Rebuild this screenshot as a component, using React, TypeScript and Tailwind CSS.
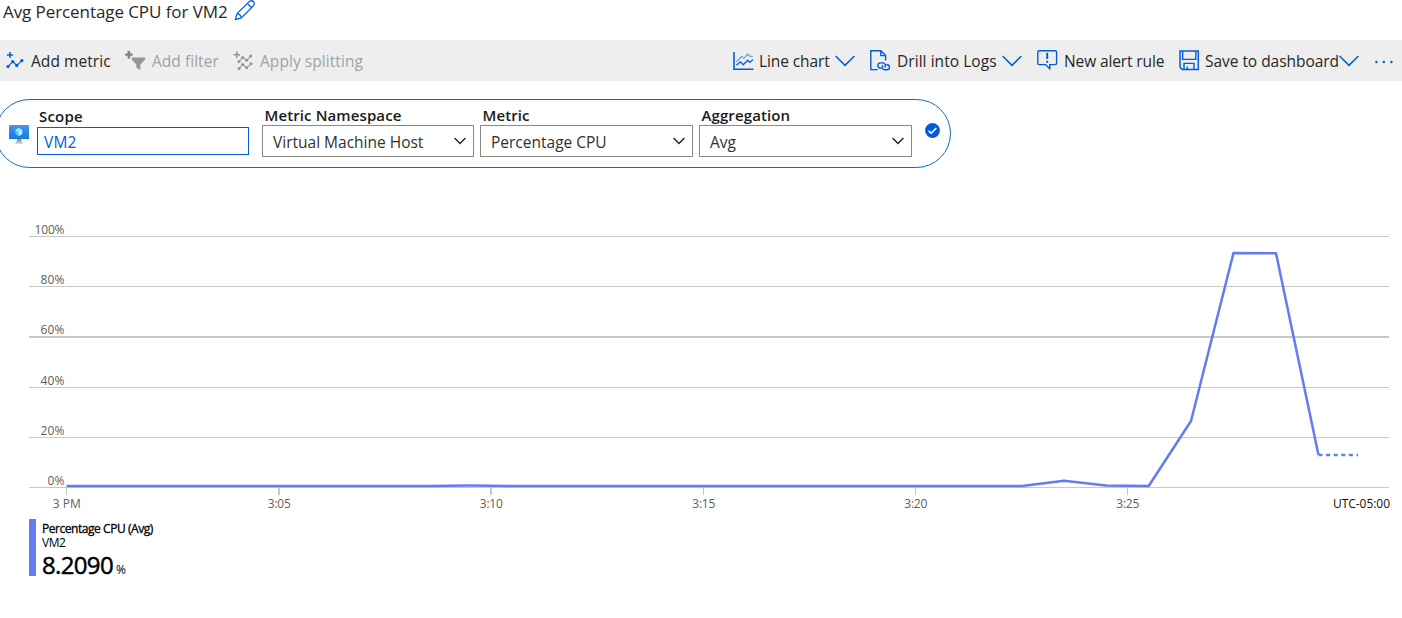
import type { ReactNode } from "react";

const BLUE = "#015cda";

function PencilIcon() {
  return (
    <svg className="-mt-px" width="22" height="22" viewBox="0 0 22 22" fill="none" stroke={BLUE} strokeWidth="1.3" strokeLinejoin="round">
      <path d="M1.2 20.6 3.1 14.6 14.6 3.1Q17.2.6 19.4 2.6 21.4 4.8 18.9 7.4L7.4 18.9Z" />
      <path d="M3.1 14.6Q6.6 15.2 7.4 18.9M13.3 4.4 17.6 8.7" />
    </svg>
  );
}

function AddMetricIcon() {
  return (
    <svg width="18" height="18" viewBox="0 0 18 18" fill={BLUE} stroke={BLUE}>
      <path d="M4 0v6M1 3h6" fill="none" strokeWidth="1.5" />
      <path d="M2 14.6 6.8 9.6 10.8 13.4 16 8.6" fill="none" strokeWidth="1.1" />
      <g stroke="none">
        <circle cx="2" cy="14.6" r="1.6" />
        <circle cx="6.8" cy="9.6" r="1.6" />
        <circle cx="10.8" cy="13.4" r="1.6" />
        <circle cx="15.9" cy="8.6" r="1.6" />
      </g>
    </svg>
  );
}

function AddFilterIcon() {
  return (
    <svg width="21" height="20" viewBox="0 0 21 20" fill="#949494">
      <path d="M2.6 0h2.5v2.4H7.6V4.8H5.1v2.6H2.6V4.8H.2V2.4H2.6Z" fill="#808080" />
      <path d="M6.8 6.4H20.2V8.4L15.4 13.4V19L11.4 16.8V13.4L6.8 8.4Z" />
    </svg>
  );
}

function SplitIcon() {
  return (
    <svg width="20" height="20" viewBox="0 0 20 20" fill="#949494" stroke="#949494">
      <path d="M3.8 .5v6.6M.5 3.8h6.6" fill="none" strokeWidth="1.6" />
      <path d="M6 10.5 9.7 6.4 13.7 9.3 17.7 5M6 17.5 9.7 13.5 13.7 16.8 18 12.8" fill="none" strokeWidth="1.1" />
      <g stroke="none">
        <circle cx="6" cy="10.5" r="1.5" />
        <circle cx="9.7" cy="6.4" r="1.5" />
        <circle cx="13.7" cy="9.3" r="1.5" />
        <circle cx="17.7" cy="5" r="1.5" />
        <circle cx="6" cy="17.5" r="1.5" />
        <circle cx="9.7" cy="13.5" r="1.5" />
        <circle cx="13.7" cy="16.8" r="1.5" />
        <circle cx="18" cy="12.8" r="1.5" />
      </g>
    </svg>
  );
}

function LineChartIcon() {
  return (
    <svg width="21" height="20" viewBox="0 0 21 20" fill="none">
      <path d="M1 1V18.3H20.5" stroke={BLUE} strokeWidth="1.6" />
      <path d="M3.4 11 8.6 5.4 11 7.4 14.6 3 17 5.4H20" stroke="#5eb0d8" strokeWidth="1.3" />
      <path d="M3.4 14.2 7.4 10.8 10.2 13.8 14.8 9.2 17 11.4 20 8.4" stroke={BLUE} strokeWidth="1.3" />
    </svg>
  );
}

function LogsIcon() {
  return (
    <svg width="21" height="21" viewBox="0 0 21 21" fill="none" stroke={BLUE} strokeWidth="1.4">
      <path d="M7.6 19.6H.8V.8H10.8L15.6 5.6V10.6M10.8.8V5.6H15.6" />
      <path d="M11.4 18.3H10.6A2.7 2.7 0 0 1 10.6 12.9H13A2.7 2.7 0 0 1 14.6 17.6M16.4 14.7H17A2.5 2.5 0 0 1 17 19.7H14.6A2.6 2.6 0 0 1 13 15.2" />
    </svg>
  );
}

function AlertIcon() {
  return (
    <svg width="21" height="21" viewBox="0 0 21 21" fill="none" stroke={BLUE} strokeWidth="1.4">
      <path d="M2 .8H18Q19.6.8 19.6 2.4V13Q19.6 14.6 18 14.6H12.8V18.8L8.6 14.6H2Q.8 14.6.8 13V2.4Q.8.8 2 .8Z" />
      <path d="M10.2 2.8V9M10.2 10.8V12.8" strokeWidth="1.9" />
    </svg>
  );
}

function SaveIcon() {
  return (
    <svg width="21" height="21" viewBox="0 0 21 21" fill="none" stroke={BLUE} strokeWidth="1.5">
      <path d="M1 1H19.3V19.4H3.2L1 17.2Z" />
      <path d="M3.6 1V9.4H16.8V1M5 19.4V13.4H15V19.4M8.2 19.4V16.4" strokeWidth="1.4" />
    </svg>
  );
}

function WideChevron() {
  return (
    <svg className="mt-px shrink-0" width="20" height="12" viewBox="0 0 20 12" fill="none" stroke={BLUE} strokeWidth="1.5">
      <path d="M.6 1 10 10.4 19.4 1" />
    </svg>
  );
}

function SelectChevron() {
  return (
    <svg className="-mt-px shrink-0" width="12" height="8" viewBox="0 0 12 8" fill="none" stroke="#222" strokeWidth="1.4">
      <path d="M.6 1 6 6.4 11.4 1" />
    </svg>
  );
}

function MonitorIcon() {
  return (
    <svg width="21" height="20" viewBox="0 0 21 20">
      <defs>
        <linearGradient id="screen" x1="0" y1="0" x2="0" y2="1">
          <stop offset="0" stopColor="#4f93ea" />
          <stop offset="1" stopColor="#0f7be0" />
        </linearGradient>
        <linearGradient id="stand" x1="0" y1="0" x2="0" y2="1">
          <stop offset="0" stopColor="#8b8b8b" />
          <stop offset="1" stopColor="#cfcfcf" />
        </linearGradient>
      </defs>
      <rect width="20" height="14" rx=".6" fill="url(#screen)" />
      <path d="M8 14H12Q12 17.4 14.6 18.8H5.2Q8 17.4 8 14Z" fill="url(#stand)" />
      <path d="M9.8 3 13.2 5V9L9.8 11 6.4 9V5Z" fill="#50d4f5" />
      <path d="M9.8 3 13.2 5 9.8 7 6.4 5Z" fill="#9cebff" />
      <path d="M9.8 7 13.2 5V9L9.8 11Z" fill="#c3f1ff" />
    </svg>
  );
}

function Item({ icon, className, children }: { icon: ReactNode; className: string; children: ReactNode }) {
  return (
    <button className={`flex shrink-0 items-center whitespace-nowrap ${className}`}>
      {icon}
      {children}
    </button>
  );
}

function Select({ label, value, className }: { label: string; value: string; className: string }) {
  return (
    <div className={`shrink-0 whitespace-nowrap ${className}`}>
      <div className="h-[25px] pt-1 pl-[2.5px] text-[15px] leading-[22px] font-semibold tracking-[0.11px] text-[#1b1a19]">{label}</div>
      <div className="flex h-8 items-center justify-between border border-[#8a8886] pr-[7px] pl-[10px] text-[15.5px] text-[#323130]">
        <span className="pt-px leading-5">{value}</span>
        <SelectChevron />
      </div>
    </div>
  );
}

const gridLines = [
  { y: 16.5, w: 1, base: 14, label: "100%", x: 34.5, len: 30 },
  { y: 66.5, w: 1, base: 64, label: "80%", x: 40.5, len: 24 },
  { y: 117, w: 2, base: 114, label: "60%", x: 40.5, len: 24 },
  { y: 167.5, w: 1, base: 165, label: "40%", x: 40.5, len: 24 },
  { y: 217.5, w: 1, base: 215, label: "20%", x: 40.5, len: 24 },
  { y: 267.5, w: 1, base: 265, label: "0%", x: 47.5, len: 17 },
];

const ticks = [
  { x: 66.5, w: 1, label: "3 PM", len: 28 },
  { x: 279, w: 2, label: "3:05", len: 23 },
  { x: 491, w: 2, label: "3:10", len: 23 },
  { x: 703.5, w: 1, label: "3:15", len: 23 },
  { x: 915.5, w: 1, label: "3:20", len: 23 },
  { x: 1127.5, w: 1, label: "3:25", len: 23 },
];

function Chart() {
  return (
    <svg className="block shrink-0" width="1402" height="296" viewBox="0 0 1402 296" fontSize="12" fill="#605e5c">
      {gridLines.map((g) => (
        <g key={g.label}>
          <path d={`M29 ${g.y}H1389`} stroke="#c8c8c8" strokeWidth={g.w} />
          <text x={g.x} y={g.base} textLength={g.len}>{g.label}</text>
        </g>
      ))}
      {ticks.map((t) => (
        <g key={t.label}>
          <path d={`M${t.x} 268V275`} stroke="#c8c8c8" strokeWidth={t.w} />
          <text x={t.x - t.len / 2 + 0.3} y="288" textLength={t.len}>{t.label}</text>
        </g>
      ))}
      <text x="1333" y="288" fill="#111" textLength="57">UTC-05:00</text>
      <path
        d="M66.5 266H430L470 265.6 512 266H1022L1064 260.8 1106 265.6 1148.7 266 1191 201 1233.5 33 1276 33.3 1318.5 235"
        fill="none" stroke="#637cef" strokeWidth="2.5" strokeLinejoin="round"
      />
      <path d="M1318.5 235H1358" stroke="#637cef" strokeWidth="2.5" strokeDasharray="4 3.6" />
    </svg>
  );
}

export default function App() {
  return (
    <div className="flex h-[618px] w-[1402px] flex-col overflow-hidden bg-white font-['Open_Sans','Noto_Sans',sans-serif]">
      <header className="flex h-10 shrink-0 items-start pl-[3px] text-[#292827]">
        <h1 className="w-[231px] text-[17px] leading-[23px] tracking-[-0.08px] whitespace-nowrap">Avg Percentage CPU for VM2</h1>
        <PencilIcon />
      </header>

      <nav className="flex h-[41px] shrink-0 items-center bg-[#eeeeee] text-[15.5px] text-[#292827]">
        <Item className="w-[119px] pl-[6px]" icon={<AddMetricIcon />}>
          <span className="pt-[2px] pl-[7px] tracking-[0.06px]">Add metric</span>
        </Item>
        <Item className="w-[114px] pl-[6px] text-[#a3a2a1]" icon={<AddFilterIcon />}>
          <span className="pt-[2px] pl-[6px] tracking-[0.04px]">Add filter</span>
        </Item>
        <Item className="w-[500px] text-[#a3a2a1]" icon={<SplitIcon />}>
          <span className="pt-[2px] pl-[7px] tracking-[0.06px]">Apply splitting</span>
        </Item>
        <Item className="w-[137px]" icon={<LineChartIcon />}>
          <span className="w-[81px] pt-[2px] pl-[5px] text-left tracking-[-0.1px]">Line chart</span>
          <WideChevron />
        </Item>
        <Item className="w-[167px]" icon={<LogsIcon />}>
          <span className="w-[111px] pt-[2px] pl-[6px] text-left tracking-[0.05px]">Drill into Logs</span>
          <WideChevron />
        </Item>
        <Item className="w-[142px]" icon={<AlertIcon />}>
          <span className="pt-[2px] pl-[6px] tracking-[-0.12px]">New alert rule</span>
        </Item>
        <Item className="w-[195px]" icon={<SaveIcon />}>
          <span className="w-[139px] pt-[2px] pl-[5px] text-left tracking-[-0.04px]">Save to dashboard</span>
          <WideChevron />
        </Item>
        <svg className="mt-[2px]" width="20" height="4" viewBox="0 0 20 4" fill={BLUE}>
          <circle cx="2.4" cy="2" r="1.2" /><circle cx="9.8" cy="2" r="1.2" /><circle cx="17.4" cy="2" r="1.2" />
        </svg>
      </nav>

      <section className="mt-[18px] -ml-[5px] flex h-[69px] w-[956px] shrink-0 rounded-full border border-[#0f6cbd] pl-[13px]">
        <div className="w-7 shrink-0 pt-[25px]"><MonitorIcon /></div>
        <div className="mr-[13px] w-[212px] shrink-0">
          <div className="h-[27px] pt-[5px] pl-[2px] text-[15px] leading-[22px] font-semibold tracking-[0.2px] text-[#1b1a19]">Scope</div>
          <div className="h-7 border border-[#015cda] pt-1 pl-[6px] text-[15.5px] leading-5 tracking-[0.2px] text-[#015cda]">VM2</div>
        </div>
        <Select className="mr-[6px] w-[212px]" label="Metric Namespace" value="Virtual Machine Host" />
        <Select className="mr-[6px] w-[213px]" label="Metric" value="Percentage CPU" />
        <Select className="mr-[13px] w-[213px]" label="Aggregation" value="Avg" />
        <svg className="mt-[23px] shrink-0" width="15" height="15" viewBox="0 0 15 15" fill="none">
          <circle cx="7.5" cy="7.5" r="7.4" fill={BLUE} />
          <path d="M3.6 7.8 6.2 10.2 11.4 5" stroke="#fff" strokeWidth="1.6" />
        </svg>
      </section>

      <div className="mt-[52px]"><Chart /></div>

      <footer className="mt-[3px] ml-[29px] flex h-[57px] shrink-0 whitespace-nowrap text-black">
        <div className="w-[7px] bg-[#637cef]" />
        <div className="pl-[6px]">
          <div className="pt-[2px] text-[12px] leading-[15px] tracking-[-0.45px] [-webkit-text-stroke:0.3px_black]">Percentage CPU (Avg)</div>
          <div className="text-[12px] leading-[13px] tracking-[-0.5px]">VM2</div>
          <div className="flex items-baseline leading-[32px]">
            <span className="w-[74px] text-[24px] tracking-[-0.65px] [-webkit-text-stroke:0.5px_black]">8.2090</span>
            <span className="text-[12px]">%</span>
          </div>
        </div>
      </footer>
    </div>
  );
}
